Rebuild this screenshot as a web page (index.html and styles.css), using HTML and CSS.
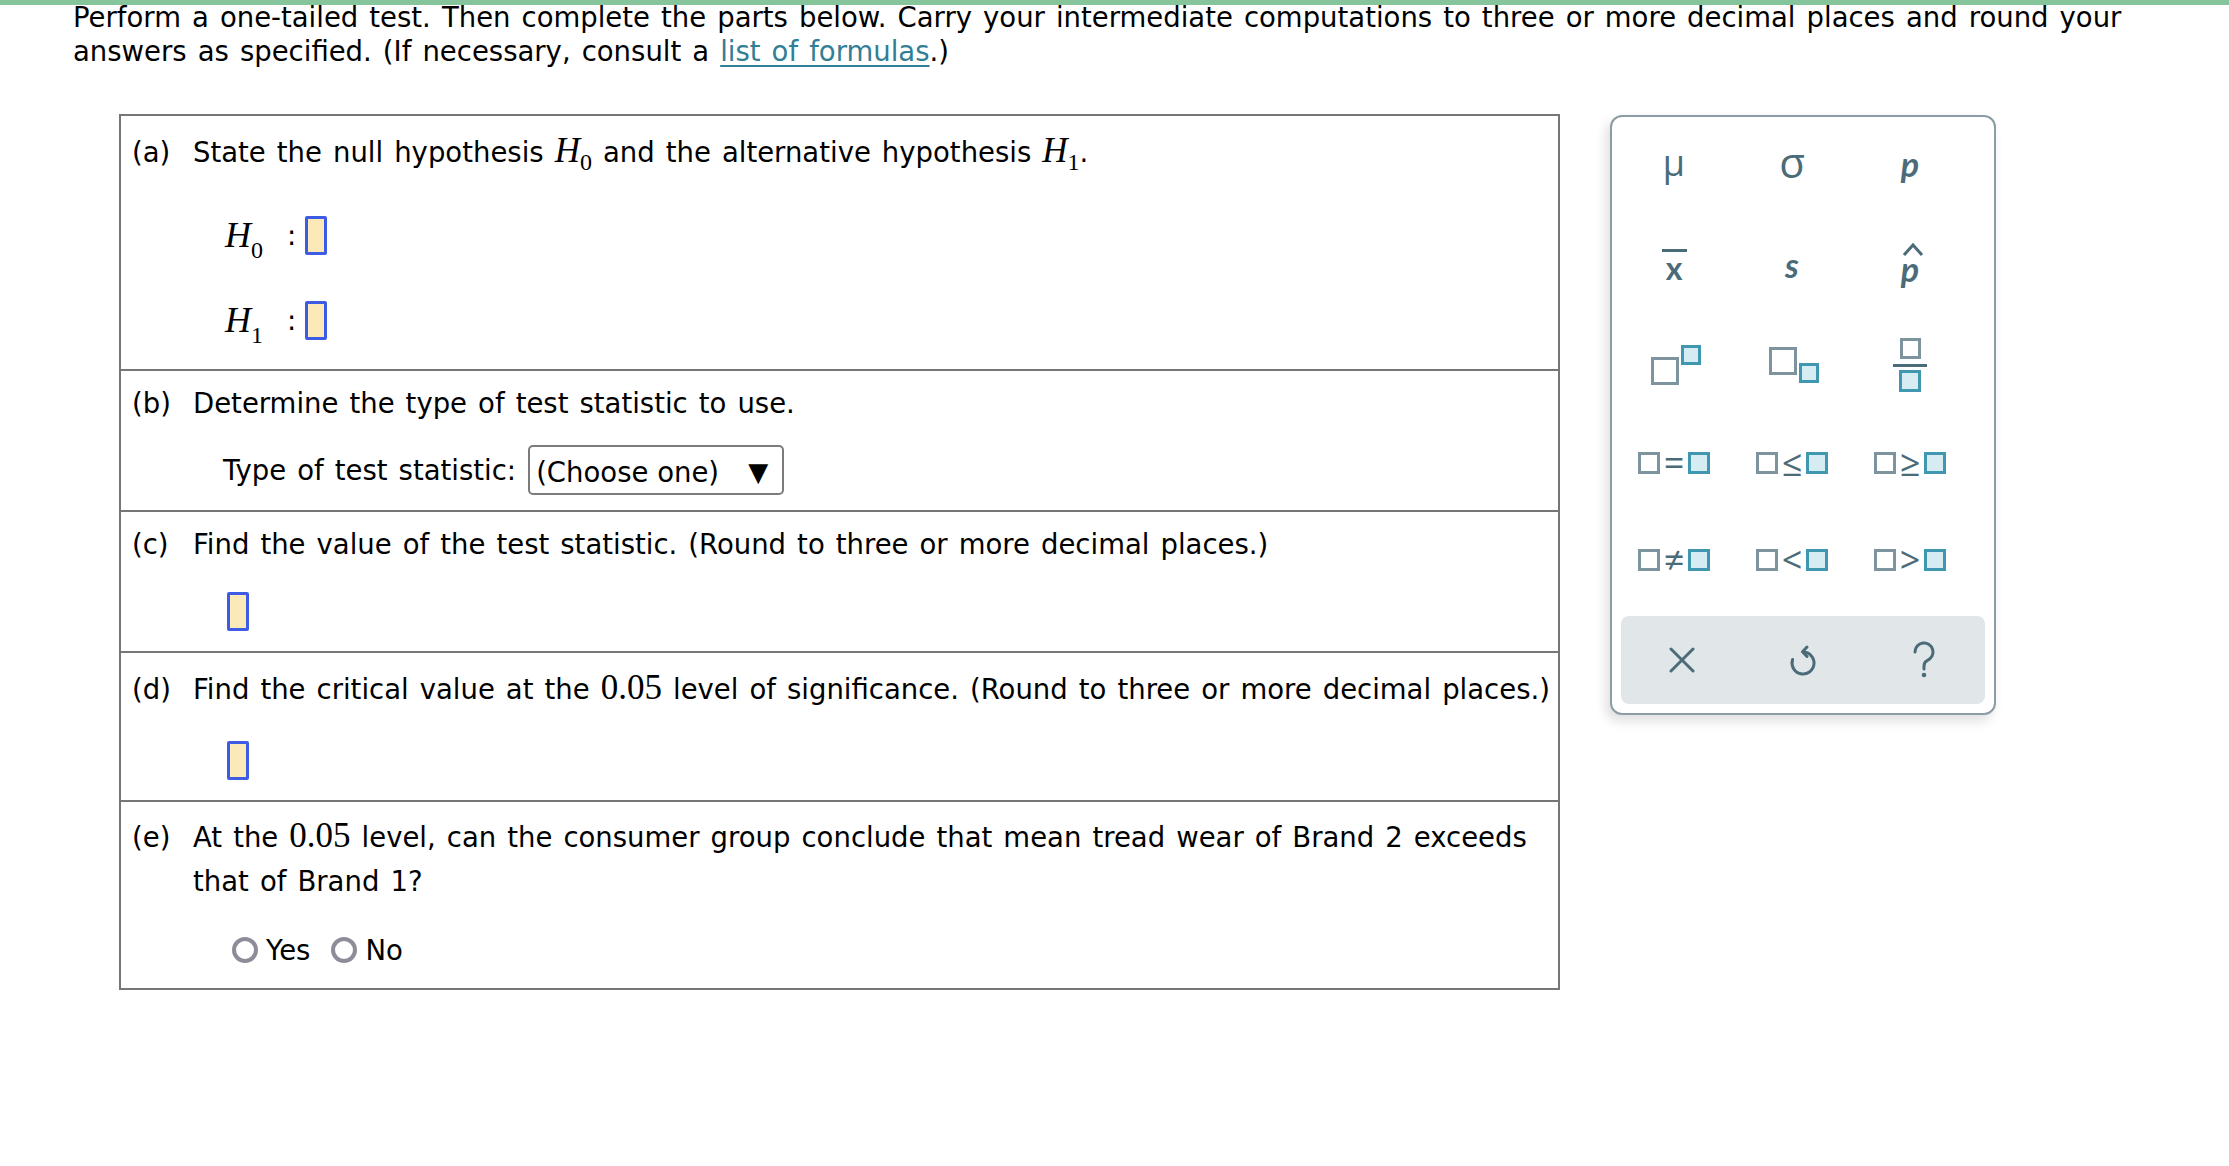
FILE: index.html
```html
<!DOCTYPE html>
<html lang="en">
<head>
<meta charset="utf-8">
<title>One-tailed test</title>
<link rel="stylesheet" href="styles.css">
</head>
<body>
<p class="intro">Perform a one-tailed test. Then complete the parts below. Carry your intermediate computations to three or more decimal places and round your<br>answers as specified. (If necessary, consult a <a class="link" href="#">list of formulas</a>.)</p>

<div class="work">
  <div class="parts">
    <div class="part part-a">
      <div class="q"><span class="lbl">(a)</span><span class="txt">State the null hypothesis <span class="m"><i>H</i><sub>0</sub></span> and the alternative hypothesis <span class="m"><i>H</i><sub>1</sub></span>.</span></div>
      <div class="hyp hyp-0"><span class="hm"><i>H</i><sub>0</sub></span><span class="colon">:</span><span class="ans"></span></div>
      <div class="hyp hyp-1"><span class="hm"><i>H</i><sub>1</sub></span><span class="colon">:</span><span class="ans"></span></div>
    </div>
    <div class="part part-b">
      <div class="q"><span class="lbl">(b)</span><span class="txt">Determine the type of test statistic to use.</span></div>
      <div class="sel-line"><span class="sel-label">Type of test statistic:</span><span class="sel"><span>(Choose one)</span><span class="arrow">&#9660;</span></span></div>
    </div>
    <div class="part part-c">
      <div class="q"><span class="lbl">(c)</span><span class="txt">Find the value of the test statistic. (Round to three or more decimal places.)</span></div>
      <div class="ans-line"><span class="ans"></span></div>
    </div>
    <div class="part part-d">
      <div class="q"><span class="lbl">(d)</span><span class="txt">Find the critical value at the <span class="num">0.05</span> level of significance. (Round to three or more decimal places.)</span></div>
      <div class="ans-line"><span class="ans"></span></div>
    </div>
    <div class="part part-e">
      <div class="q q-e"><span class="lbl">(e)</span><span class="txt">At the <span class="num">0.05</span> level, can the consumer group conclude that mean tread wear of Brand 2 exceeds<br>that of Brand 1?</span></div>
      <div class="radio-line"><span class="radio"></span><span class="rlabel">Yes</span><span class="radio radio-2"></span><span class="rlabel">No</span></div>
    </div>
  </div>

  <div class="panel">
    <div class="keys">
      <div class="key"><span class="sym mu">&mu;</span></div>
      <div class="key"><span class="sym sigma">&sigma;</span></div>
      <div class="key"><span class="sym bi">p</span></div>

      <div class="key"><span class="xbar">x</span></div>
      <div class="key"><span class="sym bi s">s</span></div>
      <div class="key"><span class="phat"><svg class="hat" width="24" height="16" viewBox="0 0 24 16"><path d="M3 14 L12 4 L21 14" fill="none" stroke="#4b6b78" stroke-width="3"/></svg><span class="sym bi">p</span></span></div>

      <div class="key"><span class="supgrp"><span class="sq big"></span><span class="sq tsm sup"></span></span></div>
      <div class="key"><span class="subgrp"><span class="sq big"></span><span class="sq tsm sub"></span></span></div>
      <div class="key"><span class="frac"><span class="sq fr-top"></span><span class="fr-line"></span><span class="sq teal fr-bot"></span></span></div>

      <div class="key"><span class="rel"><span class="sq rs"></span><span class="op">=</span><span class="sq rs teal"></span></span></div>
      <div class="key"><span class="rel"><span class="sq rs"></span><span class="op">&le;</span><span class="sq rs teal"></span></span></div>
      <div class="key"><span class="rel"><span class="sq rs"></span><span class="op">&ge;</span><span class="sq rs teal"></span></span></div>

      <div class="key"><span class="rel"><span class="sq rs"></span><span class="op">&ne;</span><span class="sq rs teal"></span></span></div>
      <div class="key"><span class="rel"><span class="sq rs"></span><span class="op">&lt;</span><span class="sq rs teal"></span></span></div>
      <div class="key"><span class="rel"><span class="sq rs"></span><span class="op">&gt;</span><span class="sq rs teal"></span></span></div>
    </div>
    <div class="bar">
      <span class="btn"><svg width="26" height="26" viewBox="0 0 26 26"><path d="M2 2 L24 24 M24 2 L2 24" stroke="#4b6b78" stroke-width="3" stroke-linecap="round" fill="none"/></svg></span>
      <span class="btn"><svg width="28" height="36" viewBox="0 0 28 36"><path d="M14 10 A11 11 0 1 1 3.6 17.5" stroke="#4b6b78" stroke-width="3" stroke-linecap="round" fill="none"/><path d="M18 5 L13.5 9.8 L18 14.5" stroke="#4b6b78" stroke-width="3" stroke-linecap="round" stroke-linejoin="round" fill="none"/></svg></span>
      <span class="btn"><svg width="24" height="38" viewBox="0 0 24 38"><path d="M3 11 A9 9 0 1 1 15.5 19.3 Q12 21 12 25 V28" stroke="#4b6b78" stroke-width="3" stroke-linecap="round" fill="none"/><circle cx="12" cy="34" r="2.3" fill="#4b6b78"/></svg></span>
    </div>
  </div>
</div>
</body>
</html>
```

FILE: styles.css
```css
html {
  background: #fff linear-gradient(#86c59c, #86c59c) top left / 100% 5px no-repeat;
}
body {
  margin: 0;
  font-family: "DejaVu Sans", Verdana, sans-serif;
  font-size: 27.5px;
  color: #000;
}
.intro {
  margin: 0 0 0 73px;
  line-height: 34px;
  white-space: nowrap;
  word-spacing: 2.3px;
}
.link {
  color: #317e96;
  text-decoration: underline;
  text-underline-offset: 4px;
}
.work {
  display: flex;
  align-items: flex-start;
  gap: 50px;
  margin: 46px 0 0 119px;
}
.parts {
  width: 1437px;
  flex: none;
  border: 2px solid #767676;
  word-spacing: 2.3px;
}
.part + .part {
  border-top: 2px solid #767676;
}
.q {
  display: flex;
  white-space: nowrap;
  line-height: 34px;
  padding-left: 11px;
}
.lbl {
  width: 61px;
  flex: none;
  word-spacing: 0;
}
.m, .hm, .num {
  font-family: "Liberation Serif", "Times New Roman", serif;
  font-size: 35px;
  word-spacing: 0;
}
.m, .num {
  line-height: 0;
}
.m sub, .hm sub {
  font-size: 24px;
  vertical-align: -8px;
  line-height: 0;
  font-style: normal;
}
.part-a { padding: 19px 0 24px; }
.hyp {
  display: flex;
  align-items: center;
  height: 50px;
  padding-left: 104px;
}
.hyp-0 { margin-top: 41px; }
.hyp-1 { margin-top: 35px; }
.hm { line-height: 40px; font-size: 36px; }
.hm sub { vertical-align: -11px; }
.colon { margin-left: 24px; margin-right: 9px; }
.ans {
  display: inline-block;
  box-sizing: border-box;
  width: 22px;
  height: 39px;
  border: 3px solid #3e5be6;
  background: #fce9b8;
  border-radius: 2px;
}
.part-b { padding: 14.5px 0 15px; }
.sel-line {
  display: flex;
  align-items: center;
  height: 50px;
  margin-top: 25.5px;
  padding-left: 102px;
}
.sel {
  box-sizing: border-box;
  width: 256px;
  height: 50px;
  margin-left: 12px;
  border: 2px solid #7b7b7b;
  border-radius: 5px;
  padding: 3px 14px 0 6px;
  display: flex;
  align-items: center;
  justify-content: space-between;
  word-spacing: 0;
}
.arrow { font-size: 26px; }
.part-c { padding: 14.5px 0 20px; }
.ans-line {
  display: flex;
  height: 40px;
  align-items: center;
  padding-left: 106px;
  margin-top: 30.5px;
}
.part-d { padding: 18.5px 0 20px; }
.part-d .ans-line { margin-top: 34.5px; }
.part-e { padding: 13px 0 23px; }
.q-e { line-height: 44px; }
.radio-line {
  display: flex;
  align-items: center;
  height: 30px;
  margin-top: 32px;
  padding-left: 111px;
}
.radio {
  box-sizing: border-box;
  width: 26px;
  height: 26px;
  border: 4px solid #8d8d99;
  border-radius: 50%;
  margin-right: 8px;
}
.radio-2 { margin-left: 21px; }

/* palette */
.panel {
  width: 382px;
  flex: none;
  margin-top: 1px;
  padding-bottom: 9px;
  border: 2px solid #8a9da5;
  border-radius: 12px;
  background: #fff;
  box-shadow: -4px 6px 12px rgba(0, 0, 0, 0.13);
}
.keys {
  display: grid;
  grid-template-columns: repeat(3, 118px);
  grid-template-rows: 99px 100px 98px 97px 97px;
  padding-left: 3px;
  margin-bottom: 8px;
}
.key {
  display: flex;
  align-items: center;
  justify-content: center;
  color: #4b6b78;
}
.sym {
  font-family: "Open Sans", "DejaVu Sans", sans-serif;
  font-size: 34px;
  line-height: 1;
}
.mu { font-size: 36px; font-weight: 400; margin-top: -7px; }
.sigma { font-size: 42px; margin-top: -9px; }
.bi {
  font-family: "Lato", "Open Sans", sans-serif;
  font-weight: 700;
  font-style: italic;
  font-size: 34px;
  margin-top: -6px;
}
.s { font-size: 34px; margin-top: -3px; }
.xbar {
  display: inline-block;
  width: 25px;
  border-top: 3px solid #4b6b78;
  text-align: center;
  font-family: "Lato", "Open Sans", sans-serif;
  font-weight: 700;
  font-size: 32px;
  line-height: 24px;
  padding-top: 4px;
  margin-top: -4px;
}
.phat {
  display: flex;
  flex-direction: column;
  align-items: center;
  margin-top: -6px;
}
.phat .bi { margin-top: 0; }
.hat { display: block; margin-bottom: -5px; margin-left: 5px; }
.sq {
  box-sizing: border-box;
  display: block;
  border: 3px solid #7d949e;
  background: #fff;
}
.teal, .tsm {
  border-color: #3f98b0;
  background: #d4ecf2;
}
.supgrp, .subgrp { display: flex; }
.supgrp { align-items: flex-start; margin-left: 4px; }
.subgrp { align-items: flex-end; margin-left: 4px; }
.big { width: 28px; height: 28px; }
.tsm { width: 20px; height: 20px; margin-left: 2px; }
.supgrp .big { margin-top: 12px; }
.subgrp .big { margin-bottom: 8px; }
.frac {
  display: flex;
  flex-direction: column;
  align-items: center;
}
.fr-top { width: 21px; height: 21px; }
.fr-line { width: 34px; height: 3px; background: #4b6b78; margin: 5px 0 3px; }
.fr-bot { width: 22px; height: 22px; }
.rel {
  display: flex;
  align-items: center;
}
.rs { width: 22px; height: 22px; }
.op {
  font-family: "Open Sans", "DejaVu Sans", sans-serif;
  font-size: 36px;
  line-height: 22px;
  width: 28px;
  text-align: center;
  color: #4b6b78;
}
.bar {
  margin: 0 9px;
  height: 88px;
  background: #e1e6e9;
  border-radius: 8px;
  display: grid;
  grid-template-columns: repeat(3, 1fr);
  align-items: center;
  justify-items: center;
}
.btn { display: flex; }
.btn svg { display: block; }
```
